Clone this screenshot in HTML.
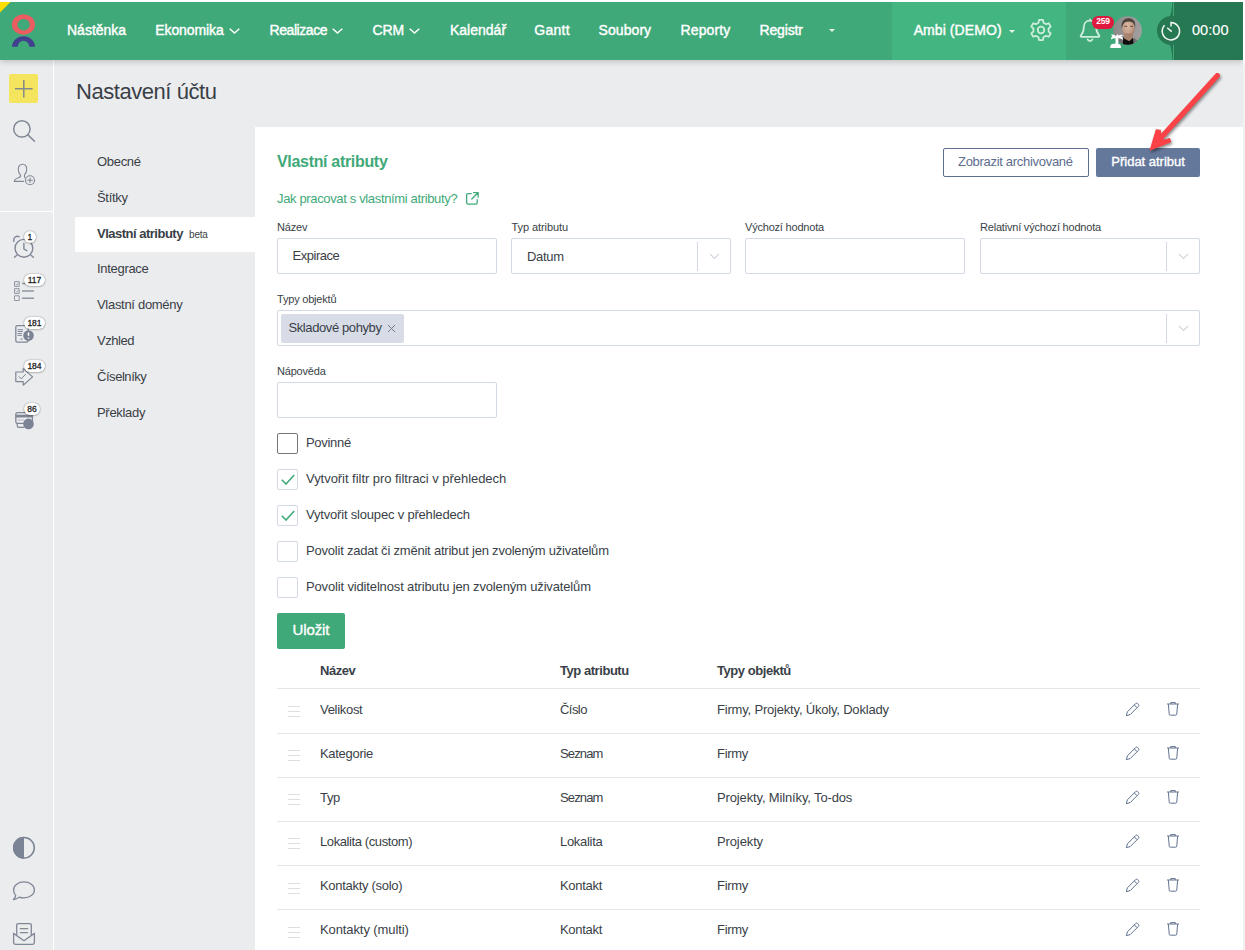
<!DOCTYPE html>
<html lang="cs">
<head>
<meta charset="utf-8">
<title>Nastavení účtu – Vlastní atributy</title>
<style>
*{box-sizing:border-box;margin:0;padding:0}
html,body{width:1245px;height:950px;overflow:hidden;background:#fff}
body{position:relative;font-family:"Liberation Sans",sans-serif;color:#3a3f47;font-size:13px}
.abs,.t{position:absolute}
.t{white-space:nowrap;line-height:1;transform-origin:0 50%}
#page{position:absolute;left:0;top:2px;width:1243px;height:948px;background:#ebecee;overflow:hidden}
#rstrip{position:absolute;left:1243px;top:2px;width:2px;height:948px;background:linear-gradient(#fff 0,#fff 58px,#f1f1f1 64px)}
/* header */
#hdr{position:absolute;left:0;top:0;width:1243px;height:58px;background:#3fa979;z-index:5;box-shadow:0 2px 6px rgba(0,0,0,.18)}
#hdr .nav{position:absolute;top:20px;color:#fff;font-size:14px;font-weight:normal;-webkit-text-stroke:.4px #fff;letter-spacing:0;white-space:nowrap;line-height:16px}
#hdr svg{position:absolute;overflow:visible}
/* sidebar */
#side{position:absolute;left:0;top:58px;width:53px;height:890px;background:#ebecee}
#sideline{position:absolute;left:53px;top:58px;width:1px;height:890px;background:#fff}
#side svg{position:absolute;overflow:visible}
.bdg{position:absolute;height:12px;border-radius:6px;background:#fff;color:#1f1f1f;font-size:8.500px;line-height:12px;text-align:center;box-shadow:0 0 1.500px rgba(0,0,0,.5),0 1px 2px rgba(0,0,0,.15)}
.bdg b{font-weight:normal;-webkit-text-stroke:.3px #1f1f1f}
/* left menu */
.mi{position:absolute;left:97px;font-size:13px;color:#3a3f47;white-space:nowrap;line-height:16px;letter-spacing:-.3px}
/* panel */
#panel{position:absolute;left:255px;top:125px;width:988px;height:830px;background:#fff}
.lbl{position:absolute;font-size:11px;color:#3a3f47;white-space:nowrap;line-height:14px;letter-spacing:-.2px}
.inp{position:absolute;height:36px;border:1px solid #d3d9e6;border-radius:2px;background:#fff}
.inp .v{position:absolute;left:15px;top:9px;font-size:13px;line-height:16px;color:#3a3f47;white-space:nowrap;letter-spacing:-.3px}
.sep{position:absolute;top:3px;width:1px;height:28.500px;background:#d3d9e6}
.cb{position:absolute;left:277px;width:21px;height:21px;border:1px solid #d3d9e6;border-radius:2px;background:#fff}
.cbl{position:absolute;left:306px;font-size:13px;line-height:16px;color:#3a3f47;white-space:nowrap;letter-spacing:-.3px}
.th{position:absolute;top:661px;font-size:13px;font-weight:bold;line-height:16px;color:#3a3f47;white-space:nowrap;letter-spacing:-.45px}
.td{position:absolute;font-size:13px;line-height:16px;color:#3a3f47;white-space:nowrap;letter-spacing:-.3px}
.hr{position:absolute;left:277px;width:923px;height:1px;background:#e6e6e6}
</style>
</head>
<body>
<div id="page">

<!-- HEADER -->
<div id="hdr">
  <div class="abs" style="left:892px;top:0;width:174px;height:58px;background:#43b581"></div>
  <div class="abs" style="left:1174px;top:0;width:69px;height:58px;background:#267853"></div>
  <svg width="6" height="58" style="left:1169px;top:0" viewBox="1169 2 6 58"><path d="M1173 2h-.7q-.3 10-2.500 14.800l3.200 1zM1173 60h-.7q-.3-10-2.500-15.300l3.200-1z" fill="#267853"/></svg>
  <svg width="12" height="12" style="left:0;top:0"><polygon points="0,0 10.5,0 0,10.5" fill="#ffdd00"/></svg>
  <!-- logo -->
  <svg width="50" height="58" style="left:0;top:0" viewBox="0 2 50 58">
    <path fill-rule="evenodd" fill="#ea5d61" d="M12 24.450a11.500 10.250 0 1 0 23 0a11.500 10.250 0 1 0-23 0zM17.400 24.700a6.200 5.800 0 1 0 12.400 0a6.200 5.800 0 1 0-12.400 0z"/>
    <path fill="#41408f" d="M12 46.800a11.500 10.500 0 0 1 23 0h-5.700a5.800 6.100 0 0 0-11.600 0z"/>
  </svg>

  <!-- nav chevrons -->
  <svg width="11" height="6" style="left:229px;top:26px" viewBox="0 0 11 6" fill="none" stroke="#fff" stroke-width="1.5"><path d="M.7.7l4.8 4.3L10.3.7"/></svg>
  <svg width="11" height="6" style="left:332px;top:26px" viewBox="0 0 11 6" fill="none" stroke="#fff" stroke-width="1.5"><path d="M.7.7l4.8 4.3L10.3.7"/></svg>
  <svg width="11" height="6" style="left:409px;top:26px" viewBox="0 0 11 6" fill="none" stroke="#fff" stroke-width="1.5"><path d="M.7.7l4.8 4.3L10.3.7"/></svg>
  <svg width="6" height="3" style="left:829px;top:27px" viewBox="0 0 6 3"><path d="M0 0h6L3 3z" fill="#e4f5ec"/></svg>
  <svg width="6" height="3" style="left:1009px;top:28px" viewBox="0 0 6 3"><path d="M0 0h6L3 3z" fill="#e4f5ec"/></svg>
  <!-- gear -->
  <svg width="24" height="24" style="left:1029px;top:16px" viewBox="-12 -12 24 24" fill="none" stroke="#cdeedd" stroke-width="1.750" stroke-linejoin="round"><path d="M-2.51 -7.28 L-1.97 -10.11 L1.97 -10.11 L2.51 -7.28 L5.05 -5.81 L7.77 -6.76 L9.74 -3.35 L7.56 -1.47 L7.56 1.47 L9.74 3.35 L7.77 6.76 L5.05 5.81 L2.51 7.28 L1.97 10.11 L-1.97 10.11 L-2.51 7.28 L-5.05 5.81 L-7.77 6.76 L-9.74 3.35 L-7.56 1.47 L-7.56 -1.47 L-9.74 -3.35 L-7.77 -6.76 L-5.05 -5.81Z"/><circle cx="0" cy="0" r="3.3"/></svg>
  <!-- bell -->
  <svg width="22" height="24" style="left:1079px;top:15.500px" viewBox="0 0 22 24" fill="none" stroke="#cdeedd" stroke-width="1.750" stroke-linejoin="round" stroke-linecap="round"><path d="M11 1.4v1.2M11 2.6c-4 0-6.2 2.9-6.2 6.6 0 4.600-1.500 6.600-3 8.400-.4.500-.1 1.200.6 1.200h17.200c.7 0 1-.7.600-1.200-1.500-1.800-3-3.800-3-8.400 0-3.700-2.200-6.600-6.200-6.600z"/><path d="M8.600 21.400c.5 1.100 1.400 1.600 2.400 1.600s1.900-.5 2.400-1.600"/></svg>
  <!-- badge -->
  <div class="abs" style="left:1092px;top:14px;width:21.800px;height:12.800px;border-radius:6.400px;background:#e0193f"></div>
  <div class="t" style="left:1096.200px;top:15.300px;font-size:8.500px;font-weight:bold;color:#fff;letter-spacing:-.2px">259</div>
  <!-- avatar -->
  <svg width="50" height="44" style="left:1100px;top:8px" viewBox="1100 10 50 44">
    <defs><clipPath id="avc"><circle cx="1127.550" cy="30.500" r="14.300"/></clipPath>
    <linearGradient id="avbg" x1="0" x2="1"><stop offset="0" stop-color="#8b8988"/><stop offset=".45" stop-color="#979594"/><stop offset="1" stop-color="#a3a1a0"/></linearGradient>
    <radialGradient id="avsk" cx=".42" cy=".35" r=".75"><stop offset="0" stop-color="#dcbca8"/><stop offset=".6" stop-color="#c09a84"/><stop offset="1" stop-color="#8e6c5a"/></radialGradient></defs>
    <g clip-path="url(#avc)">
      <rect x="1112" y="15" width="32" height="32" fill="url(#avbg)"/>
      <path d="M1114 46c.5-4 3.500-6.200 9.500-8.200h9c3.500 1 6 2.600 7.500 8.200z" fill="#6f6f70"/>
      <path d="M1122.800 46l.4-8.600 4 1.500 5.600-2.300 1 9.400z" fill="#0e0e0e"/>
      <path d="M1124 34h8.500l.5 3.800-3.800 3.400-5-2.600z" fill="#a88470"/>
      <ellipse cx="1128.500" cy="28.600" rx="6.100" ry="8.600" fill="url(#avsk)"/>
      <path d="M1121.700 28.500c-.9-5.500 1.500-10.300 7-10.300 5.200 0 7.400 4.200 6.300 10-.3-3.600-1.300-6.400-6.300-6.600-4.400-.2-6 2.600-7 6.900z" fill="#4d4038"/>
      <path d="M1124.200 26.300h3.200M1130 26.300h3" stroke="#5a4438" stroke-width=".9"/>
      <path d="M1125.500 33.800c1.800.9 4 .9 5.800 0" stroke="#8d6856" stroke-width=".8" fill="none"/>
    </g>
    <!-- palm -->
    <g fill="#fff">
      <path d="M1110.300 48v-1.300c0-1.800 1.500-3 3.300-3h4c1.800 0 3.300 1.200 3.300 3v1.300z"/>
      <path d="M1115.200 44.500c.5-2.200.5-4.300.1-6.200l2.600-.4c.6 2.200.6 4.400.2 6.600z"/>
      <path d="M1117.200 38.600c-1.200-3.400-3.800-4.900-6.600-3.800.9.300 1.500.7 1.900 1.300-1 .7-1.500 1.900-1.400 3.500 1.700-1.300 3.800-1.600 6.100-1z"/>
      <path d="M1116.600 38.400c1.400-3.200 4-4.300 6.700-3-1 .2-1.700.6-2.100 1.100 1.200.7 1.900 1.800 2 3.400-1.800-1.500-4-2-6.600-1.500z"/>
      <path d="M1116 38c-.5-1.900.3-3.300 2.200-4-.2.900 0 1.800.5 2.600z"/>
    </g>
  </svg>
  <!-- timer -->
  <div class="abs" style="left:1157.300px;top:14px;width:29px;height:29px;border-radius:50%;background:#267853"></div>
  <svg width="24" height="24" style="left:1159px;top:18px" viewBox="1159 20 24 24" fill="none" stroke="#f2f8f4" stroke-width="1.500" stroke-linecap="butt"><path d="M1171 22v4.600M1170.300 22.600a8.650 8.650 0 1 1-5.700 2.700"/><path d="M1167.200 27.800l4.500 3.800"/></svg>
  <div class="nav" style="left:67px">Nástěnka</div>
  <div class="nav" style="left:155.300px;letter-spacing:-.1px">Ekonomika</div>
  <div class="nav" style="left:269.600px;letter-spacing:-.45px">Realizace</div>
  <div class="nav" style="left:372.400px">CRM</div>
  <div class="nav" style="left:450px">Kalendář</div>
  <div class="nav" style="left:534.300px;letter-spacing:.26px">Gantt</div>
  <div class="nav" style="left:598.500px;letter-spacing:.08px">Soubory</div>
  <div class="nav" style="left:680.600px;letter-spacing:.1px">Reporty</div>
  <div class="nav" style="left:759.600px;letter-spacing:-.19px">Registr</div>
  <div class="nav" style="left:913.700px;letter-spacing:.08px">Ambi (DEMO)</div>
  <div class="nav" style="left:1192px;-webkit-text-stroke:.15px #fff;font-size:14.500px;letter-spacing:.05px">00:00</div>
</div>

<!-- SIDEBAR -->
<div id="side"></div>
<div id="sideline"></div>
<div class="abs" style="left:0;top:209px;width:53px;height:1px;background:#fff"></div>


<div class="abs" style="left:9px;top:72px;width:29px;height:29px;border-radius:2px;background:#f5e55e"></div>
<svg class="abs" style="left:0;top:0" width="53" height="948" viewBox="0 2 53 948" fill="none" stroke="#808896" stroke-width="1.3" stroke-linecap="round" stroke-linejoin="round">
  <!-- plus -->
  <path d="M15 88.700h17.600M23.800 80v17.600" stroke="#84898a" stroke-width="1.500" stroke-linecap="butt"/>
  <!-- search -->
  <circle cx="21.900" cy="128.900" r="8.200" stroke-width="1.500"/><path d="M27.900 134.900l6.600 6.400" stroke-width="1.500"/>
  <!-- user plus -->
  <path d="M14.300 181.400H23.600M14.300 181.400C14.500 179.300 16.500 178.400 18.600 177.800C20.200 177.200 20.800 176 20.400 174.800C19.200 173.600 18.300 172 18.300 169.500C18.200 166.300 19.800 164.300 22.400 164.300C25.200 164.300 26.900 166.300 26.700 169.500C26.600 171.700 25.800 173.400 24.600 174.600C24.200 175.800 24.400 177 25 177.800" stroke-width="1.100"/>
  <circle cx="30" cy="180.300" r="4.500" stroke-width="1.100"/><path d="M27.700 180.300h4.600M30 178v4.600" stroke-width="1.100"/>
  <!-- alarm -->
  <circle cx="23.900" cy="248.300" r="8.900" stroke-width="1.400"/>
  <path d="M13.900 241.300a3.800 3.800 0 0 1 5.200-4.600M23.900 243.300v5.700l2.900 1.700M16.800 255.200l-2.300 2.100M31 255.200l2.400 2.100" stroke-width="1.400"/>
  <!-- checklist -->
  <g stroke-width="1" stroke-linecap="butt" stroke="#8f96a1"><rect x="14.500" y="281.600" width="4.700" height="4.700"/><rect x="14.500" y="288.700" width="4.700" height="4.700"/><rect x="14.500" y="295.800" width="4.700" height="4.700"/>
  <path d="M15.500 283.800l1.300 1.200 1.700-2M15.500 290.900l1.300 1.200 1.700-2" stroke-width=".8"/>
  <path d="M22 283.600h12M22 291h12M22 298.300h12" stroke-width="1.500"/></g>
  <!-- doc -->
  <rect x="15.800" y="325.600" width="12.400" height="16.600" rx="1.600" stroke-width="1.300"/>
  <path d="M17.600 329.700h5.300M17.600 331.500h5.300M17.600 333.500h4.300M17.600 335.400h4.300M20.300 339h2.500" stroke-width="1" stroke-linecap="butt"/>
  <circle cx="28.500" cy="335.600" r="5.300" fill="#7b8494" stroke="none"/>
  <path d="M28.500 332.600v3.200M28.500 337.600v1.200" stroke="#fff" stroke-width="1.500" stroke-linecap="butt"/>
  <!-- arrow check -->
  <path d="M15.800 372h7.400v-3.400l9.400 8.300-9.400 8.300v-3.600h-7.400z" stroke-width="1.200"/>
  <path d="M19.300 376.700l2 2.200 4.200-4.500" stroke-width="1"/>
  <!-- card -->
  <path d="M17.200 423.400v2.300c0 1 .7 1.700 1.700 1.700h5" stroke-width="1.200"/>
  <rect x="15.800" y="412.600" width="16.600" height="10.800" rx="1.600" stroke-width="1.300"/>
  <path d="M15.800 416.100h16.600" stroke-width="2.800" stroke-linecap="butt"/>
  <path d="M17.400 420h6.800" stroke-width="1" stroke="#b5bac3" stroke-linecap="butt"/>
  <circle cx="28.500" cy="423.900" r="5.300" fill="#7b8494" stroke="none"/>
  <!-- half circle -->
  <circle cx="24" cy="847.800" r="10.300" stroke="#7b8494" stroke-width="1.500"/>
  <path d="M24 836.800a11 11 0 0 0 0 22z" fill="#7b8494" stroke="none"/>
  <!-- bubble -->
  <path d="M24 881.900c5.700 0 10.400 3.600 10.400 8s-4.700 8-10.400 8c-1.700 0-3.300-.3-4.700-.8-1.600 1.500-3.600 2.300-5.800 2.500 1.300-1.200 2-2.600 2.200-4.200-1.300-1.500-2.100-3.400-2.100-5.500 0-4.400 4.700-8 10.400-8z" stroke-width="1.300"/>
  <!-- mail -->
  <path d="M16.700 934.600v-9.800c0-.7.500-1.200 1.200-1.200h12.200c.7 0 1.200.5 1.200 1.200v9.800M20.400 928.700h7.200M20.400 932.700h7.200" stroke-width="1.300"/>
  <path d="M13.600 933.400v9.100c0 1 .8 1.800 1.800 1.800h17.200c1 0 1.800-.8 1.800-1.800v-9.100L24 940.800z" stroke-width="1.300"/>
</svg>
<div class="bdg" style="left:23.900px;top:228.700px;width:12.200px;height:12.200px;line-height:12.200px"><b>1</b></div>
<div class="bdg" style="left:23.700px;top:271.800px;width:21.600px;height:12.300px;line-height:12.300px"><b>117</b></div>
<div class="bdg" style="left:23.700px;top:314.800px;width:21.600px;height:12.300px;line-height:12.300px"><b>181</b></div>
<div class="bdg" style="left:23.700px;top:358px;width:21.600px;height:12.300px;line-height:12.300px"><b>184</b></div>
<div class="bdg" style="left:23.700px;top:401px;width:16.600px;height:12.300px;line-height:12.300px"><b>86</b></div>

<!-- TITLE + MENU -->
<div class="t" id="title" style="left:76px;top:79.300px;font-size:22px;color:#3a3f47;letter-spacing:-.45px">Nastavení účtu</div>
<div class="abs" style="left:75px;top:215px;width:180px;height:34.600px;background:#fff"></div>
<div class="mi" style="top:151.8px">Obecné</div>
<div class="mi" style="top:187.8px">Štítky</div>
<div class="mi" style="top:223.8px;font-weight:bold;letter-spacing:-.5px">Vlastní atributy <span style="font-weight:normal;font-size:10px;margin-left:3px;letter-spacing:-.2px">beta</span></div>
<div class="mi" style="top:258.8px">Integrace</div>
<div class="mi" style="top:294.8px">Vlastní domény</div>
<div class="mi" style="top:330.8px;letter-spacing:-.45px">Vzhled</div>
<div class="mi" style="top:366.8px;letter-spacing:-.45px">Číselníky</div>
<div class="mi" style="top:402.8px">Překlady</div>

<!-- PANEL -->
<div id="panel"></div>
<div class="t" id="h2" style="left:277px;top:152px;font-size:16px;font-weight:bold;color:#3fa979;letter-spacing:-.32px">Vlastní atributy</div>
<div class="t" id="lnk" style="left:277px;top:189.800px;font-size:13px;color:#3fa979;letter-spacing:-.35px">Jak pracovat s vlastními atributy?</div>
<svg class="abs" style="left:465px;top:189px" width="15" height="15" viewBox="0 0 15 15" fill="none" stroke="#3fa979" stroke-width="1.3" stroke-linecap="round" stroke-linejoin="round"><path d="M6.2 2.6H3.2a1.6 1.6 0 0 0-1.6 1.6v7.4a1.6 1.6 0 0 0 1.6 1.6h7.4a1.6 1.6 0 0 0 1.6-1.6V8.6"/><path d="M8.6 1.6h4.6v4.6M13 1.8 6.8 8"/></svg>

<!-- buttons -->
<div class="abs" style="left:943px;top:146px;width:146px;height:29px;border:1px solid #5d6d8e;border-radius:2px;background:#fff"></div>
<div class="t" id="b1" style="left:958px;top:153px;font-size:13px;color:#5d6d8e;letter-spacing:-.3px">Zobrazit archivované</div>
<div class="abs" style="left:1096px;top:146px;width:104px;height:29px;border-radius:2px;background:#64789b"></div>
<div class="t" id="b2" style="left:1111.300px;top:153px;font-size:13px;-webkit-text-stroke:.35px #fff;color:#fff;letter-spacing:-.01px">Přidat atribut</div>

<!-- form row 1 -->
<div class="lbl" style="left:277px;top:218px">Název</div>
<div class="lbl" style="left:511.500px;top:218px;letter-spacing:-.08px">Typ atributu</div>
<div class="lbl" style="left:745px;top:218px">Výchozí hodnota</div>
<div class="lbl" style="left:980px;top:218px">Relativní výchozí hodnota</div>
<div class="inp" style="left:277px;top:236px;width:220px"><div class="v" style="left:14.600px;letter-spacing:-.5px">Expirace</div></div>
<div class="inp" style="left:511px;top:236px;width:220px"><div class="v" style="top:10px">Datum</div><div class="sep" style="left:185px"></div>
  <svg class="abs" style="left:197px;top:14px" width="11" height="7" viewBox="0 0 11 7" fill="none" stroke="#cfd4de" stroke-width="1.100"><path d="M1 1l4.500 4.500L10 1"/></svg></div>
<div class="inp" style="left:745px;top:236px;width:220px"></div>
<div class="inp" style="left:980px;top:236px;width:220px"><div class="sep" style="left:185px"></div>
  <svg class="abs" style="left:197px;top:14px" width="11" height="7" viewBox="0 0 11 7" fill="none" stroke="#cfd4de" stroke-width="1.100"><path d="M1 1l4.500 4.500L10 1"/></svg></div>

<!-- typy objektu -->
<div class="lbl" style="left:277px;top:290px">Typy objektů</div>
<div class="inp" style="left:277px;top:308px;width:923px"><div class="sep" style="left:888px"></div>
  <svg class="abs" style="left:900px;top:14px" width="11" height="7" viewBox="0 0 11 7" fill="none" stroke="#cfd4de" stroke-width="1.100"><path d="M1 1l4.500 4.500L10 1"/></svg>
  <div class="abs" style="left:3px;top:3px;width:123px;height:29px;border-radius:2px;background:#d7dce7"></div>
  <div class="v" id="tag" style="left:10.500px;top:9px;letter-spacing:-.4px">Skladové pohyby</div>
  <svg class="abs" style="left:109px;top:12.500px" width="9" height="9" viewBox="0 0 9 9" stroke="#737c8b" stroke-width="1"><path d="M1 1l7 7M8 1l-7 7"/></svg>
</div>

<!-- napoveda -->
<div class="lbl" style="left:277px;top:362px">Nápověda</div>
<div class="inp" style="left:277px;top:380px;width:220px"></div>

<!-- checkboxes -->
<div class="cb" style="top:431px;border-color:#767676"></div>
<div class="cbl" style="top:433px">Povinné</div>
<div class="cb" style="top:467px"><svg class="abs" style="left:3px;top:4px" width="14" height="11" viewBox="0 0 14 11" fill="none" stroke="#3fa979" stroke-width="1.600"><path d="M.8 5.800l4.200 4.200L13.200 1"/></svg></div>
<div class="cbl" style="top:469px;letter-spacing:-.04px">Vytvořit filtr pro filtraci v přehledech</div>
<div class="cb" style="top:503px"><svg class="abs" style="left:3px;top:4px" width="14" height="11" viewBox="0 0 14 11" fill="none" stroke="#3fa979" stroke-width="1.600"><path d="M.8 5.800l4.200 4.200L13.200 1"/></svg></div>
<div class="cbl" style="top:505px;letter-spacing:-.19px">Vytvořit sloupec v přehledech</div>
<div class="cb" style="top:539px"></div>
<div class="cbl" style="top:541px;letter-spacing:-.21px">Povolit zadat či změnit atribut jen zvoleným uživatelům</div>
<div class="cb" style="top:575px"></div>
<div class="cbl" style="top:577px;letter-spacing:-.15px">Povolit viditelnost atributu jen zvoleným uživatelům</div>

<!-- save -->
<div class="abs" style="left:277px;top:611px;width:68px;height:36px;border-radius:2px;background:#3fa979"></div>
<div class="t" id="save" style="left:292.500px;top:619.600px;font-size:15px;-webkit-text-stroke:.35px #fff;color:#fff;letter-spacing:-.1px">Uložit</div>

<!-- table -->
<div class="th" style="left:320px">Název</div>
<div class="th" style="left:560px">Typ atributu</div>
<div class="th" style="left:717px">Typy objektů</div>
<div class="hr" style="top:686px"></div>
<div class="td" style="left:320px;top:700px">Velikost</div><div class="td" style="left:560px;top:700px;letter-spacing:-0.55px">Číslo</div><div class="td" style="left:717px;top:700px;letter-spacing:-0.19px">Firmy, Projekty, Úkoly, Doklady</div>
<svg class="abs" style="left:288px;top:704px" width="12" height="11" viewBox="0 0 12 11" stroke="#dedede" stroke-width="1"><path d="M0 .5h12M0 5.500h12M0 10.500h12"/></svg>
<svg class="abs" style="left:1125px;top:700px" width="15" height="15" viewBox="0 0 15 15" fill="none" stroke="#62728f" stroke-width="1" stroke-linejoin="round"><path d="M10.6 1.6a1.5 1.5 0 0 1 2.1 0l.7.7a1.5 1.5 0 0 1 0 2.1L5.2 12.6l-3.9 1.1 1.1-3.9z"/><path d="M9.3 2.9l2.8 2.8"/></svg>
<svg class="abs" style="left:1166px;top:699px" width="14" height="15" viewBox="0 0 14 15" fill="none" stroke="#62728f" stroke-width="1" stroke-linejoin="round"><path d="M1 3h12M4.7 3V1.6h4.6V3M2.4 3.2l.8 9.7a1.4 1.4 0 0 0 1.4 1.3h4.8a1.4 1.4 0 0 0 1.4-1.3l.8-9.7"/></svg>
<div class="hr" style="top:731px"></div>
<div class="td" style="left:320px;top:744px">Kategorie</div><div class="td" style="left:560px;top:744px;letter-spacing:-0.85px">Seznam</div><div class="td" style="left:717px;top:744px">Firmy</div>
<svg class="abs" style="left:288px;top:748px" width="12" height="11" viewBox="0 0 12 11" stroke="#dedede" stroke-width="1"><path d="M0 .5h12M0 5.500h12M0 10.500h12"/></svg>
<svg class="abs" style="left:1125px;top:744px" width="15" height="15" viewBox="0 0 15 15" fill="none" stroke="#62728f" stroke-width="1" stroke-linejoin="round"><path d="M10.6 1.6a1.5 1.5 0 0 1 2.1 0l.7.7a1.5 1.5 0 0 1 0 2.1L5.2 12.6l-3.9 1.1 1.1-3.9z"/><path d="M9.3 2.9l2.8 2.8"/></svg>
<svg class="abs" style="left:1166px;top:743px" width="14" height="15" viewBox="0 0 14 15" fill="none" stroke="#62728f" stroke-width="1" stroke-linejoin="round"><path d="M1 3h12M4.7 3V1.6h4.6V3M2.4 3.2l.8 9.7a1.4 1.4 0 0 0 1.4 1.3h4.8a1.4 1.4 0 0 0 1.4-1.3l.8-9.7"/></svg>
<div class="hr" style="top:775px"></div>
<div class="td" style="left:320px;top:788px">Typ</div><div class="td" style="left:560px;top:788px;letter-spacing:-0.85px">Seznam</div><div class="td" style="left:717px;top:788px;letter-spacing:-0.14px">Projekty, Milníky, To-dos</div>
<svg class="abs" style="left:288px;top:792px" width="12" height="11" viewBox="0 0 12 11" stroke="#dedede" stroke-width="1"><path d="M0 .5h12M0 5.500h12M0 10.500h12"/></svg>
<svg class="abs" style="left:1125px;top:788px" width="15" height="15" viewBox="0 0 15 15" fill="none" stroke="#62728f" stroke-width="1" stroke-linejoin="round"><path d="M10.6 1.6a1.5 1.5 0 0 1 2.1 0l.7.7a1.5 1.5 0 0 1 0 2.1L5.2 12.6l-3.9 1.1 1.1-3.9z"/><path d="M9.3 2.9l2.8 2.8"/></svg>
<svg class="abs" style="left:1166px;top:787px" width="14" height="15" viewBox="0 0 14 15" fill="none" stroke="#62728f" stroke-width="1" stroke-linejoin="round"><path d="M1 3h12M4.7 3V1.6h4.6V3M2.4 3.2l.8 9.7a1.4 1.4 0 0 0 1.4 1.3h4.8a1.4 1.4 0 0 0 1.4-1.3l.8-9.7"/></svg>
<div class="hr" style="top:819px"></div>
<div class="td" style="left:320px;top:832px;letter-spacing:-0.4px">Lokalita (custom)</div><div class="td" style="left:560px;top:832px">Lokalita</div><div class="td" style="left:717px;top:832px;letter-spacing:-0.12px">Projekty</div>
<svg class="abs" style="left:288px;top:836px" width="12" height="11" viewBox="0 0 12 11" stroke="#dedede" stroke-width="1"><path d="M0 .5h12M0 5.500h12M0 10.500h12"/></svg>
<svg class="abs" style="left:1125px;top:832px" width="15" height="15" viewBox="0 0 15 15" fill="none" stroke="#62728f" stroke-width="1" stroke-linejoin="round"><path d="M10.6 1.6a1.5 1.5 0 0 1 2.1 0l.7.7a1.5 1.5 0 0 1 0 2.1L5.2 12.6l-3.9 1.1 1.1-3.9z"/><path d="M9.3 2.9l2.8 2.8"/></svg>
<svg class="abs" style="left:1166px;top:831px" width="14" height="15" viewBox="0 0 14 15" fill="none" stroke="#62728f" stroke-width="1" stroke-linejoin="round"><path d="M1 3h12M4.7 3V1.6h4.6V3M2.4 3.2l.8 9.7a1.4 1.4 0 0 0 1.4 1.3h4.8a1.4 1.4 0 0 0 1.4-1.3l.8-9.7"/></svg>
<div class="hr" style="top:863px"></div>
<div class="td" style="left:320px;top:876px">Kontakty (solo)</div><div class="td" style="left:560px;top:876px">Kontakt</div><div class="td" style="left:717px;top:876px">Firmy</div>
<svg class="abs" style="left:288px;top:881px" width="12" height="11" viewBox="0 0 12 11" stroke="#dedede" stroke-width="1"><path d="M0 .5h12M0 5.500h12M0 10.500h12"/></svg>
<svg class="abs" style="left:1125px;top:876px" width="15" height="15" viewBox="0 0 15 15" fill="none" stroke="#62728f" stroke-width="1" stroke-linejoin="round"><path d="M10.6 1.6a1.5 1.5 0 0 1 2.1 0l.7.7a1.5 1.5 0 0 1 0 2.1L5.2 12.6l-3.9 1.1 1.1-3.9z"/><path d="M9.3 2.9l2.8 2.8"/></svg>
<svg class="abs" style="left:1166px;top:875px" width="14" height="15" viewBox="0 0 14 15" fill="none" stroke="#62728f" stroke-width="1" stroke-linejoin="round"><path d="M1 3h12M4.7 3V1.6h4.6V3M2.4 3.2l.8 9.7a1.4 1.4 0 0 0 1.4 1.3h4.8a1.4 1.4 0 0 0 1.4-1.3l.8-9.7"/></svg>
<div class="hr" style="top:907px"></div>
<div class="td" style="left:320px;top:920px;letter-spacing:-0.1px">Kontakty (multi)</div><div class="td" style="left:560px;top:920px">Kontakt</div><div class="td" style="left:717px;top:920px">Firmy</div>
<svg class="abs" style="left:288px;top:925px" width="12" height="11" viewBox="0 0 12 11" stroke="#dedede" stroke-width="1"><path d="M0 .5h12M0 5.500h12M0 10.500h12"/></svg>
<svg class="abs" style="left:1125px;top:920px" width="15" height="15" viewBox="0 0 15 15" fill="none" stroke="#62728f" stroke-width="1" stroke-linejoin="round"><path d="M10.6 1.6a1.5 1.5 0 0 1 2.1 0l.7.7a1.5 1.5 0 0 1 0 2.1L5.2 12.6l-3.9 1.1 1.1-3.9z"/><path d="M9.3 2.9l2.8 2.8"/></svg>
<svg class="abs" style="left:1166px;top:919px" width="14" height="15" viewBox="0 0 14 15" fill="none" stroke="#62728f" stroke-width="1" stroke-linejoin="round"><path d="M1 3h12M4.7 3V1.6h4.6V3M2.4 3.2l.8 9.7a1.4 1.4 0 0 0 1.4 1.3h4.8a1.4 1.4 0 0 0 1.4-1.3l.8-9.7"/></svg>
<div class="hr" style="top:951px"></div>


<!-- red arrow annotation -->
<svg class="abs" style="left:1130px;top:58px;z-index:9;filter:drop-shadow(1.5px 2px 1.5px rgba(0,0,0,.45))" width="110" height="110" viewBox="1130 60 110 110">
  <path d="M1217.400 75.600L1162 136.500" stroke="#fb4247" stroke-width="5.200" stroke-linecap="round" fill="none"/>
  <path d="M1150.300 150L1156.300 129.800L1160.300 130.400L1160.800 137.200L1164.200 140.300L1169.600 138.600L1170.600 141.800z" fill="#fb4247" stroke="#fb4247" stroke-width="1.200" stroke-linejoin="round"/>
</svg>
</div>
<div id="rstrip"></div>
</body>
</html>
